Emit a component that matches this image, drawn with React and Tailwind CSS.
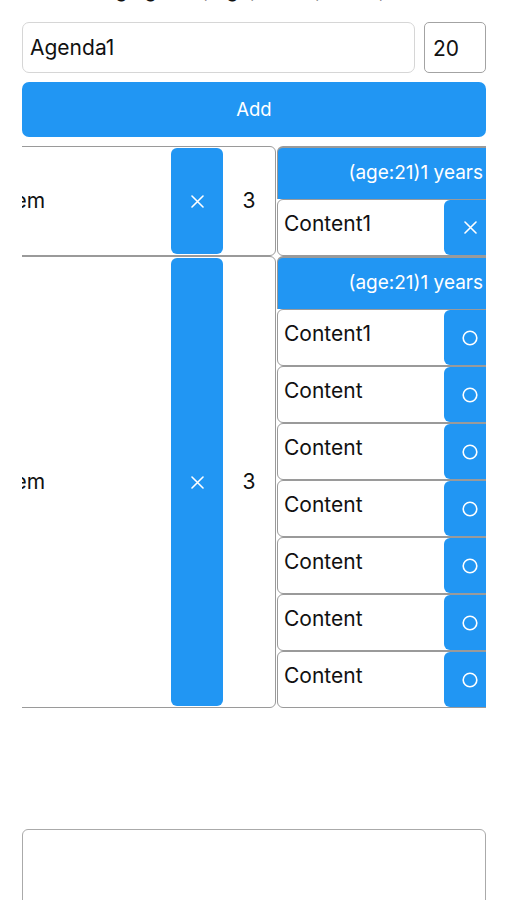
import React from "react";

function XIcon() {
  return (
    <svg width="13" height="13" viewBox="0 0 13 13" fill="none">
      <path d="M1 1L12 12M12 1L1 12" stroke="white" strokeWidth="1.6" strokeLinecap="round" />
    </svg>
  );
}

function CircleIcon() {
  return (
    <svg width="16" height="16" viewBox="0 0 16 16" fill="none">
      <circle cx="8" cy="8" r="6.8" stroke="white" strokeWidth="1.6" />
    </svg>
  );
}

function ContentRow({ text, icon }) {
  return (
    <div className="flex h-[57px] shrink-0 rounded-[6px] border border-[#9a9a9a] bg-white">
      <div className="flex flex-1 items-center pb-[8px] pl-[6px] text-[21px] leading-[24px] text-[#111]">
        {text}
      </div>
      <div className="flex w-[52px] items-center justify-center rounded-l-[6px] bg-[#2196f3]">
        {icon === "x" ? <XIcon /> : <CircleIcon />}
      </div>
    </div>
  );
}

function Row({ contents, icon }) {
  return (
    <div className="flex items-stretch">
      <div className="flex w-[266px] shrink-0 rounded-[6px] border border-[#9a9a9a] bg-white">
        <div className="flex w-[160px] items-center overflow-hidden text-[21px] leading-[24px] text-[#111]">
          <span className="-ml-[9px]">Item</span>
        </div>
        <div className="my-[1px] flex w-[52px] items-center justify-center rounded-[6px] bg-[#2196f3]">
          <XIcon />
        </div>
        <div className="flex w-[52px] items-center justify-center text-[21px] leading-[24px] text-[#111]">3</div>
      </div>
      <div className="ml-[1px] flex w-[220px] shrink-0 flex-col">
        <div className="flex h-[53px] items-center justify-end rounded-tl-[6px] border-t-2 border-l border-[#9a9a9a] bg-[#2196f3] pr-[14px] text-[19px] text-white">
          (age:21)1 years
        </div>
        {contents.map((c, i) => (
          <ContentRow key={i} text={c} icon={icon} />
        ))}
      </div>
    </div>
  );
}

export default function App() {
  return (
    <div className="h-[900px] overflow-hidden bg-white pl-[22px] pr-[21px] font-['Inter',sans-serif] text-[#111]">
      <div className="-mt-[22px] h-[24px] whitespace-nowrap text-center text-[20px] leading-[24px] text-[#111]">
        Drag agenda, age, count, name, <span className="text-[#2196f3]">Edit</span>
      </div>
      <div className="mt-[20px] flex h-[51px] gap-[9px]">
        <div className="flex flex-1 items-center rounded-[7px] border border-[#d6d6d6] px-[7px] text-[21px] leading-[24px]">
          Agenda1
        </div>
        <div className="flex w-[62px] items-center rounded-[5px] border-[1.5px] border-[#a3a3a3] pl-[8px] pt-[2px] text-[21px] leading-[24px]">
          20
        </div>
      </div>
      <div className="mt-[9px] flex h-[55px] items-center justify-center rounded-[7px] bg-[#2196f3] text-[18.5px] text-white">
        Add
      </div>
      <div className="mt-[9px] w-[464px] overflow-hidden">
        <div className="-ml-[12px] flex w-[520px] flex-col">
          <Row contents={["Content1"]} icon="x" />
          <Row
            contents={["Content1", "Content", "Content", "Content", "Content", "Content", "Content"]}
            icon="o"
          />
        </div>
      </div>
      <div className="mt-[121px] h-[100px] rounded-[6px] border-[1.5px] border-[#aaaaaa]" />
    </div>
  );
}
